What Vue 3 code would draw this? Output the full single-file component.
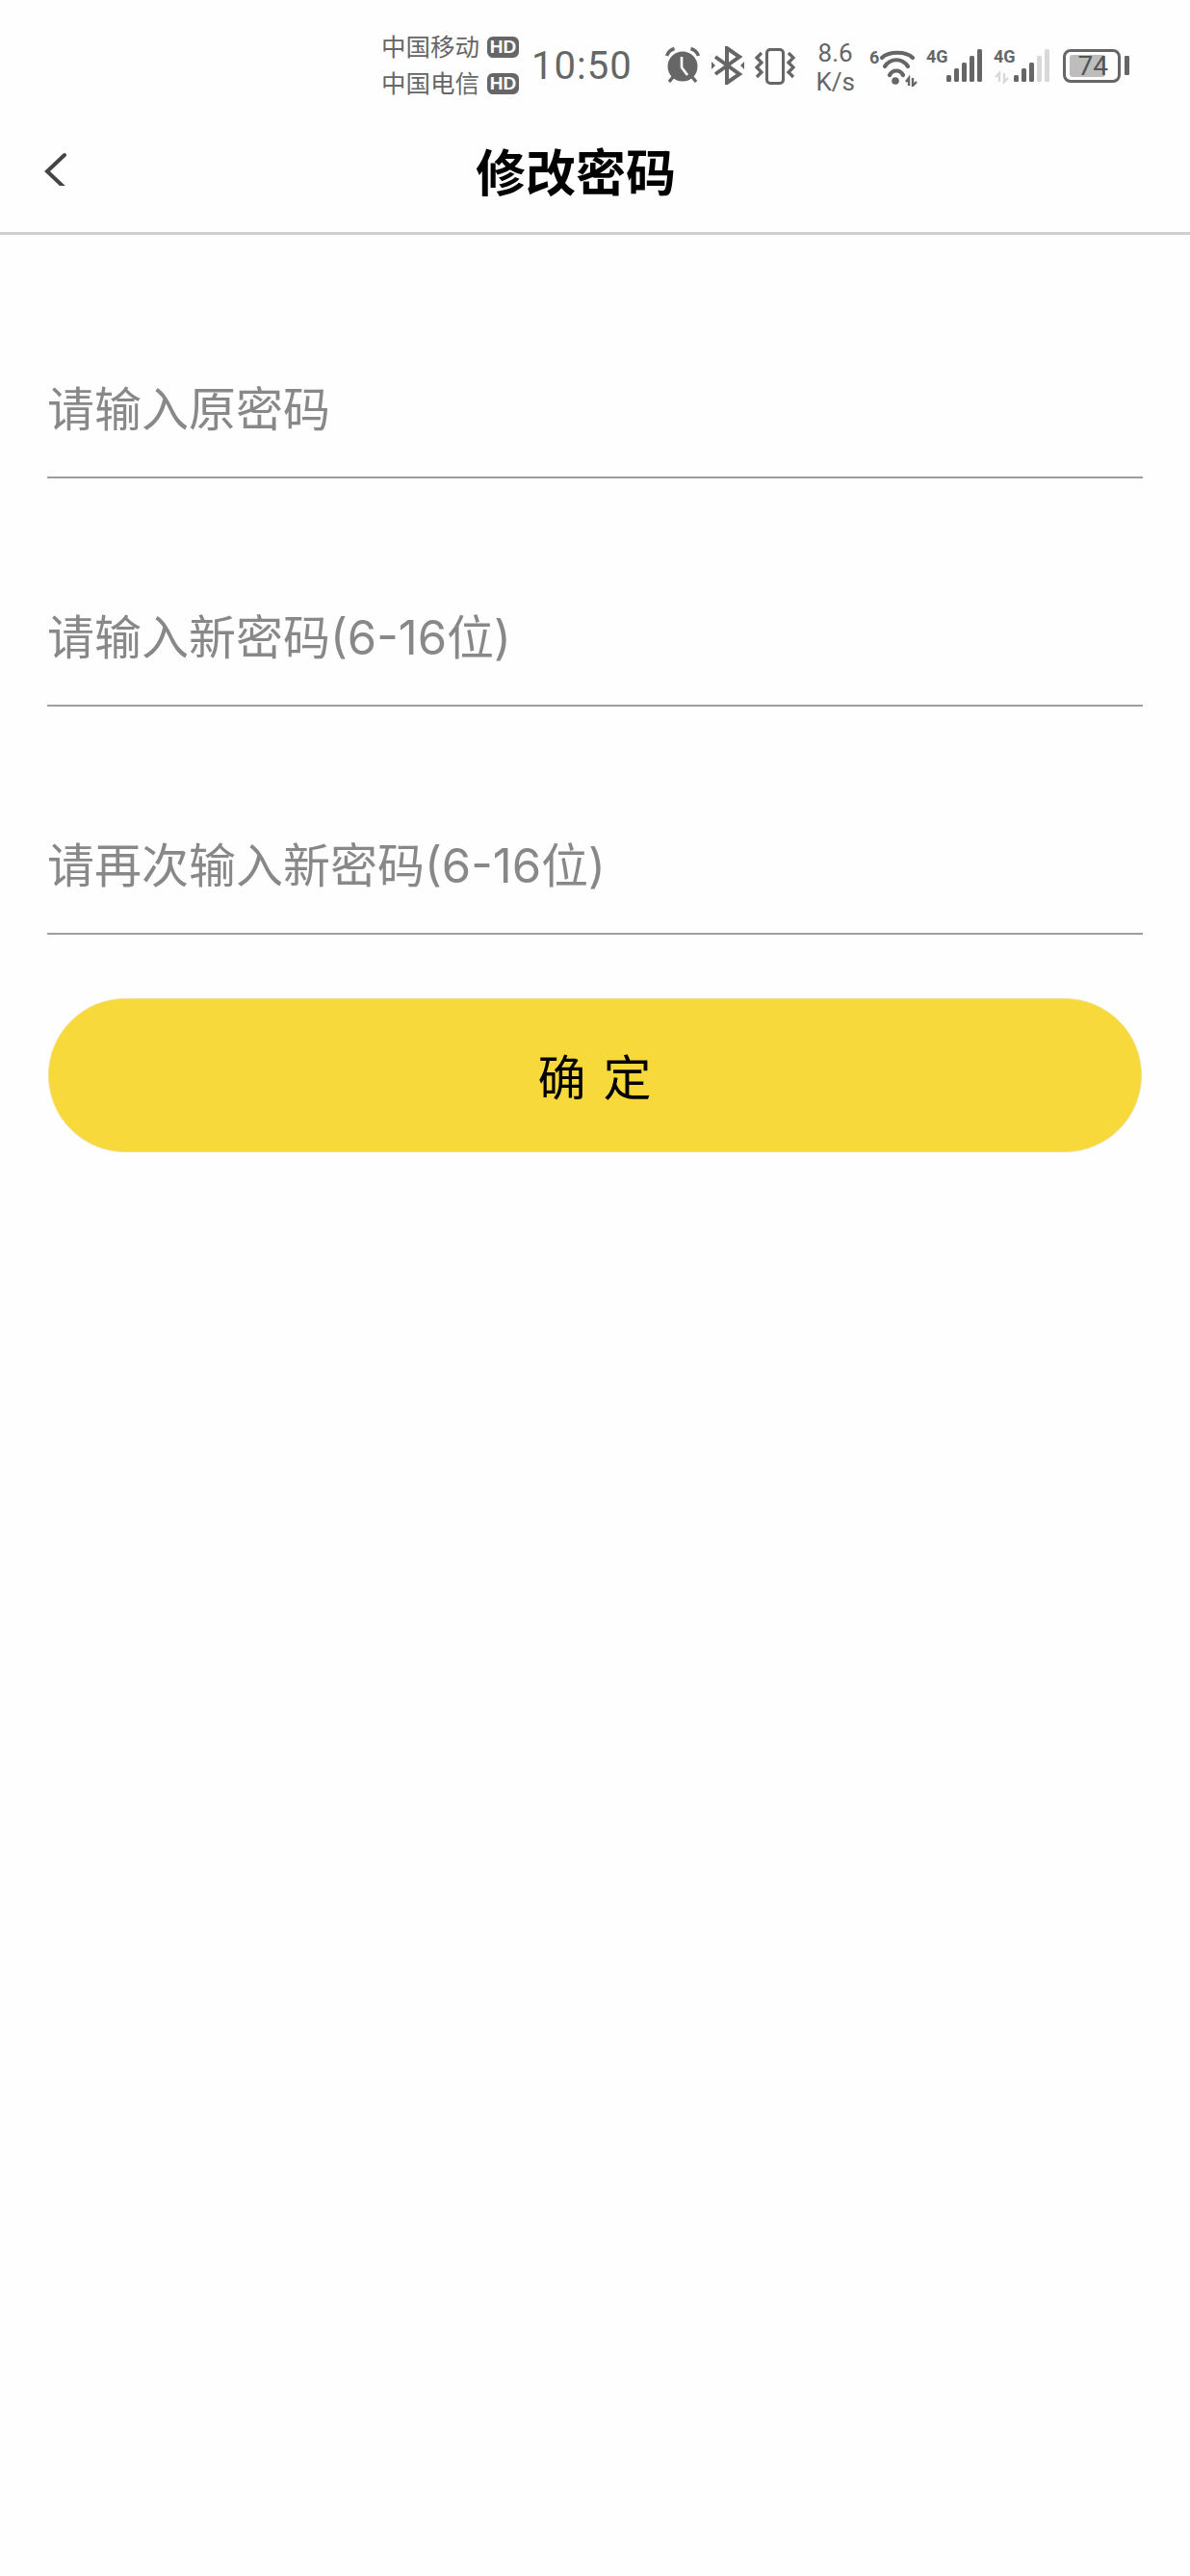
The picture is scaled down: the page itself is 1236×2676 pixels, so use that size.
<template>
  <div class="page">
    <!-- status bar -->
    <div class="status">
      <div class="carriers">
        <div v-for="name in carriers" :key="name" class="carrier">
          <span class="carrier-name">{{ name }}</span>
          <span class="hd">HD</span>
        </div>
      </div>
      <span class="time">10:50</span>

      <svg class="ic-alarm" width="36" height="40" viewBox="0 0 36 40">
        <circle cx="18" cy="21" r="15.500" fill="#666" />
        <path d="M17 11v11l6 8" fill="none" stroke="#fff" stroke-width="2.600" />
        <path d="M1.500 10C3 6 6 3.500 9.500 2.500M34.500 10C33 6 30 3.500 26.500 2.500" fill="none" stroke="#666" stroke-width="3.400" />
        <path d="M8 32l-4 5M28 32l4 5" stroke="#666" stroke-width="3.400" />
      </svg>

      <svg class="ic-bt" width="34" height="40" viewBox="0 0 34 40">
        <path d="M4 11l25 18-13 9V2l13 9L4 29" fill="none" stroke="#666" stroke-width="4" />
        <path d="M0 16v8l4-4zM34 16v8l-4-4z" fill="#666" />
      </svg>

      <svg class="ic-vibrate" width="44" height="40" viewBox="0 0 44 40">
        <rect x="13.500" y="3.500" width="17" height="35" rx="3.500" fill="none" stroke="#666" stroke-width="3" />
        <path d="M8 7L3 12l5 5-5 5 5 5-5 5M36 7l5 5-5 5 5 5-5 5 5 5" fill="none" stroke="#666" stroke-width="3.200" />
      </svg>

      <div class="speed">
        <span>8.6</span>
        <span>K/s</span>
      </div>

      <svg class="ic-wifi" width="50" height="44" viewBox="0 -4 50 44">
        <text x="0" y="16" class="tiny">6</text>
        <path d="M13 10C20 3 38 3 45 10" fill="none" stroke="#666" stroke-width="4.200" stroke-linecap="round" />
        <path d="M16 19C22 10 34 10 40 19" fill="none" stroke="#666" stroke-width="4.200" stroke-linecap="round" />
        <path d="M21 28C24 22 32 22 35 28" fill="none" stroke="#666" stroke-width="4.200" stroke-linecap="round" />
        <circle cx="27" cy="34" r="3.800" fill="#666" />
        <path d="M41 39v-8l-3 4M45 31v8l4-4" fill="none" stroke="#666" stroke-width="2.400" />
      </svg>

      <svg class="ic-signal sim-one" width="60" height="44" viewBox="0 -4 60 44">
        <text x="0" y="15" class="tiny">4G</text>
        <rect v-for="bar in bars" :key="bar.x" :x="bar.x" :y="35 - bar.h" width="5" :height="bar.h" rx="1.500" fill="#666" />
      </svg>

      <svg class="ic-signal sim-two" width="60" height="44" viewBox="0 -4 60 44">
        <text x="0" y="15" class="tiny">4G</text>
        <path d="M6 35v-9l-4 4M11 26v9l4-4" fill="none" stroke="#d8d8d8" stroke-width="2.400" />
        <rect v-for="(bar, i) in bars" :key="bar.x" :x="bar.x" :y="35 - bar.h" width="5" :height="bar.h" rx="1.500" :fill="i < 3 ? '#666' : '#d8d8d8'" />
      </svg>

      <div class="battery">
        <div class="battery-body">
          <div class="battery-fill"></div>
          <span class="battery-num">74</span>
        </div>
        <div class="battery-nub"></div>
      </div>
    </div>

    <!-- nav -->
    <div class="nav">
      <svg class="back" width="30" height="36" viewBox="0 0 30 36">
        <path d="M25 4L7 21l18 17" fill="none" stroke="#444" stroke-width="4" stroke-linecap="round" />
      </svg>
      <h1 class="title">修改密码</h1>
    </div>

    <div class="form">
      <div v-for="text in fields" :key="text" class="field">{{ text }}</div>
      <button class="submit">确 定</button>
    </div>
  </div>
</template>

<script setup>
const carriers = ['中国移动', '中国电信'];

const fields = [
  '请输入原密码',
  '请输入新密码(6-16位)',
  '请再次输入新密码(6-16位)',
];

const bars = [
  { x: 21, h: 7 },
  { x: 29, h: 14 },
  { x: 37, h: 20 },
  { x: 45, h: 27 },
  { x: 53, h: 34 },
];
</script>

<style>
html, body {
  margin: 0;
  background: #fefefe;
}
</style>

<style scoped>
.page {
  width: 1236px;
  min-height: 2676px;
  background: #fefefe;
  font-family: Inter, "Noto Sans CJK SC", sans-serif;
}

.status {
  height: 120px;
  box-sizing: border-box;
  padding: 16px 0 0 396px;
  display: flex;
  align-items: center;
  color: #666;
}

.carriers {
  width: 143px;
  display: flex;
  flex-direction: column;
  gap: 8px;
}

.carrier {
  height: 30px;
  display: flex;
  align-items: center;
  justify-content: space-between;
}

.carrier-name {
  font-size: 25.500px;
  line-height: 30px;
}

.hd {
  width: 33px;
  height: 22px;
  border-radius: 6px;
  background: #666;
  color: #fefefe;
  font-family: "Liberation Sans", sans-serif;
  font-size: 19px;
  font-weight: 700;
  line-height: 22px;
  text-align: center;
}

.time {
  margin: 2px 0 0 13px;
  font-family: Roboto, sans-serif;
  font-size: 40px;
  letter-spacing: 1px;
  line-height: 48px;
}

.ic-alarm {
  margin-left: 34px;
}

.ic-bt {
  margin-left: 12px;
}

.ic-vibrate {
  margin-left: 10px;
}

.speed {
  width: 44px;
  margin: 3px 0 0 19px;
  display: flex;
  flex-direction: column;
  align-items: center;
  font-family: Roboto, sans-serif;
  font-size: 26px;
  line-height: 30px;
}

.ic-wifi {
  flex: none;
  margin-left: 13px;
}

.tiny {
  font-family: Roboto, sans-serif;
  font-size: 18px;
  font-weight: 700;
  fill: #666;
}

.ic-signal {
  flex: none;
}

.sim-one {
  margin-left: 9px;
}

.sim-two {
  margin-left: 10px;
}

.battery {
  margin-left: 12px;
  display: flex;
  align-items: center;
  gap: 4px;
}

.battery-body {
  position: relative;
  width: 60px;
  height: 35px;
  box-sizing: border-box;
  border: 3px solid #666;
  border-radius: 8px;
}

.battery-fill {
  width: 37px;
  height: 23px;
  margin: 3px 0 0 4px;
  border-radius: 3px;
  background: #bdbdbd;
}

.battery-num {
  position: absolute;
  left: 13px;
  top: 0;
  font-family: Roboto, sans-serif;
  font-size: 28px;
  line-height: 29px;
  color: #555;
}

.battery-nub {
  width: 5px;
  height: 20px;
  border-radius: 1px;
  background: #666;
}

.nav {
  position: relative;
  height: 124px;
  box-sizing: border-box;
  border-bottom: 3px solid #d0d0d0;
  display: flex;
  align-items: center;
  justify-content: center;
}

.back {
  position: absolute;
  left: 42px;
  top: 37px;
}

.title {
  margin: 0 0 0 -40px;
  font-size: 52px;
  font-weight: 700;
  color: #000;
  line-height: 70px;
  position: relative;
  top: 0;
}

.form {
  padding: 109px 49px 0;
  display: flex;
  flex-direction: column;
  gap: 93px;
}

.field {
  height: 144px;
  padding: 0 0 6px 0;
  box-sizing: border-box;
  border-bottom: 2px solid #9e9e9e;
  display: flex;
  align-items: center;
  font-size: 49px;
  color: #888;
}

.submit {
  height: 160px;
  margin: -27px 1px 0;
  border: 1px solid #f1e08a;
  border-radius: 80px;
  background: #f7d93c;
  color: #000;
  font-family: inherit;
  font-size: 50px;
  letter-spacing: 2px;
  padding: 0 0 3px 1px;
}
</style>
